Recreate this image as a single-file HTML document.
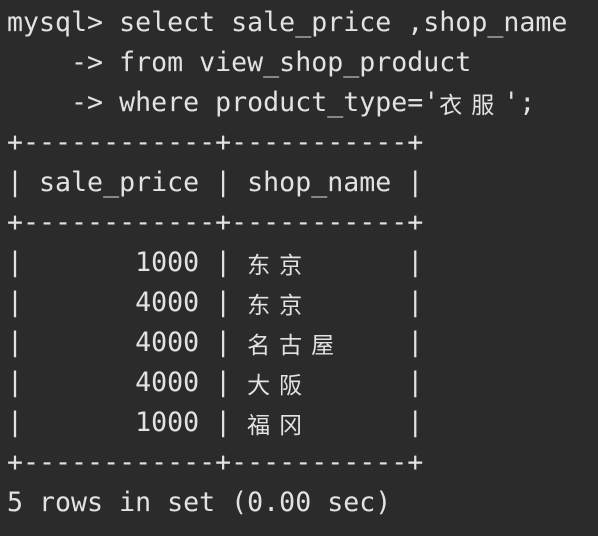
<!DOCTYPE html>
<html><head><meta charset="utf-8"><style>
html,body{margin:0;padding:0;background:#2b2b2b;}
body{width:598px;height:536px;overflow:hidden;}
.t{padding:3px 0 0 7px;font-family:"DejaVu Sans Mono","Liberation Mono",monospace;font-size:26.6px;color:#e2e2e2;}
.t div{height:40px;line-height:40px;white-space:pre;overflow:hidden;}
.c{display:inline-block;width:32px;height:40px;line-height:40px;vertical-align:top;font-family:"Noto Sans CJK SC",sans-serif;font-size:23px;text-align:left;}
</style></head><body><div class="t">
<div>mysql&gt; select sale_price ,shop_name</div>
<div>    -&gt; from view_shop_product</div>
<div>    -&gt; where product_type='<span class="c">衣</span><span class="c">服</span>';</div>
<div>+------------+-----------+</div>
<div>| sale_price | shop_name |</div>
<div>+------------+-----------+</div>
<div>|       1000 | <span class="c">东</span><span class="c">京</span>      |</div>
<div>|       4000 | <span class="c">东</span><span class="c">京</span>      |</div>
<div>|       4000 | <span class="c">名</span><span class="c">古</span><span class="c">屋</span>    |</div>
<div>|       4000 | <span class="c">大</span><span class="c">阪</span>      |</div>
<div>|       1000 | <span class="c">福</span><span class="c">冈</span>      |</div>
<div>+------------+-----------+</div>
<div>5 rows in set (0.00 sec)</div>
</div></body></html>
